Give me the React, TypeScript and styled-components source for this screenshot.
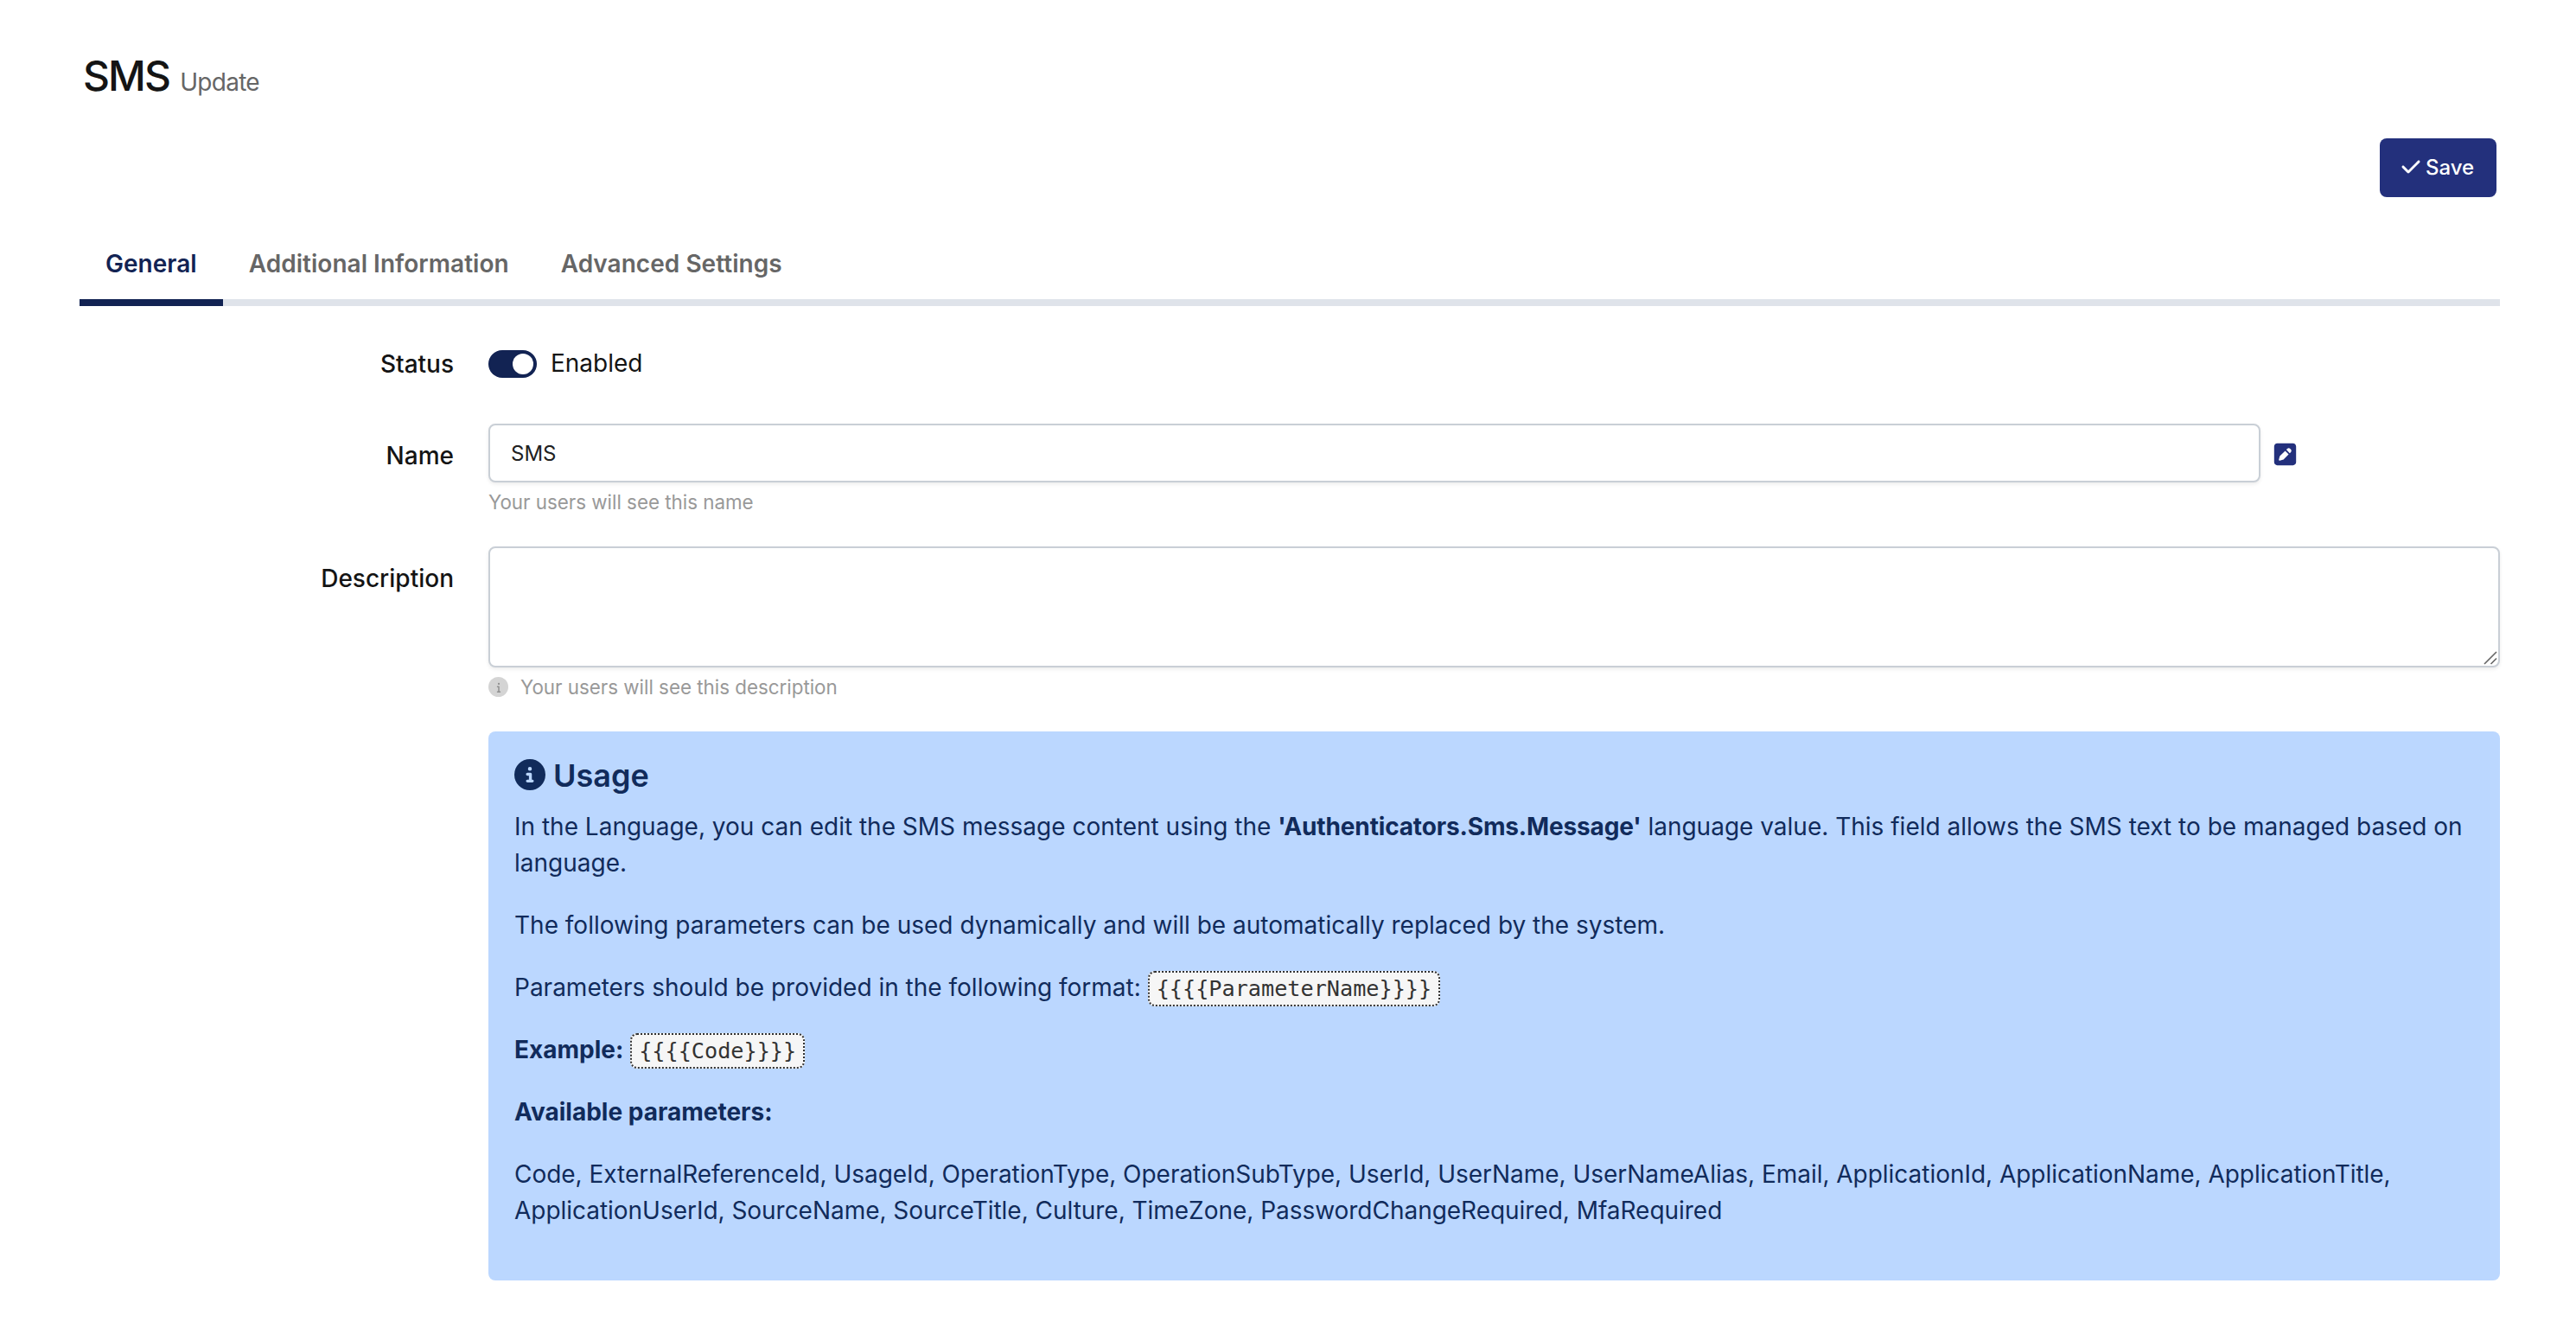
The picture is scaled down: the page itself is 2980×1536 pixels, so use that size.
import { useState } from "react";
import styled, { createGlobalStyle } from "styled-components";
import { FaCheck, FaCircleInfo, FaInfo, FaSquarePen } from "react-icons/fa6";

const tabs = ["General", "Additional Information", "Advanced Settings"];

const parameters = [
  "Code",
  "ExternalReferenceId",
  "UsageId",
  "OperationType",
  "OperationSubType",
  "UserId",
  "UserName",
  "UserNameAlias",
  "Email",
  "ApplicationId",
  "ApplicationName",
  "ApplicationTitle",
  "ApplicationUserId",
  "SourceName",
  "SourceTitle",
  "Culture",
  "TimeZone",
  "PasswordChangeRequired",
  "MfaRequired",
];

function UsagePanel() {
  return (
    <Usage>
      <UsageTitle>
        <FaCircleInfo size={36} />
        Usage
      </UsageTitle>
      <Paragraph>
        In the Language, you can edit the SMS message content using the{" "}
        <LanguageKey>'Authenticators.Sms.Message'</LanguageKey> language value.
        This field allows the SMS text to be managed based on language.
      </Paragraph>
      <Paragraph>
        The following parameters can be used dynamically and will be
        automatically replaced by the system.
      </Paragraph>
      <Paragraph>
        Parameters should be provided in the following format:{" "}
        <Code>{"{{{{ParameterName}}}}"}</Code>
      </Paragraph>
      <Paragraph>
        <b>Example:</b> <Code>{"{{{{Code}}}}"}</Code>
      </Paragraph>
      <Paragraph>
        <b>Available parameters:</b>
      </Paragraph>
      <Paragraph $tight>{parameters.join(", ")}</Paragraph>
    </Usage>
  );
}

function App() {
  const [activeTab, setActiveTab] = useState("General");
  const [enabled, setEnabled] = useState(true);
  const [name, setName] = useState("SMS");

  return (
    <Page>
      <GlobalStyle />
      <Header>
        <Title>SMS</Title>
        <SubTitle>Update</SubTitle>
      </Header>
      <Toolbar>
        <SaveButton>
          <FaCheck size={24} />
          Save
        </SaveButton>
      </Toolbar>
      <Tabs>
        {tabs.map((tab) => (
          <Tab
            key={tab}
            $active={tab === activeTab}
            onClick={() => setActiveTab(tab)}
          >
            {tab}
          </Tab>
        ))}
      </Tabs>
      <Form>
        <Label $top={14}>Status</Label>
        <SwitchRow>
          <Switch $on={enabled} onClick={() => setEnabled(!enabled)}>
            <Knob />
          </Switch>
          <SwitchText>Enabled</SwitchText>
        </SwitchRow>

        <Label $top={16}>Name</Label>
        <Field>
          <NameRow>
            <Input value={name} onChange={(e) => setName(e.target.value)} />
            <EditIcon size={29} />
          </NameRow>
          <Hint>Your users will see this name</Hint>
        </Field>

        <Label $top={16}>Description</Label>
        <Field>
          <TextAreaBox>
            <TextArea />
            <Grip viewBox="0 0 16 16">
              <path d="M1 15L15 1M8.5 15L15 8.5" />
            </Grip>
          </TextAreaBox>
          <Hint>
            <HintIcon>
              <FaInfo size={12} />
            </HintIcon>
            Your users will see this description
          </Hint>
        </Field>

        <span />
        <UsagePanel />
      </Form>
    </Page>
  );
}

export default App;

const GlobalStyle = createGlobalStyle`
  * {
    box-sizing: border-box;
  }
  body {
    margin: 0;
    background: #fff;
    color: #141414;
    font-family: Inter, sans-serif;
    font-size: 28px;
    line-height: 42px;
  }
`;
const Page = styled.div`
  padding: 58px 88px 0 92px;
`;
const Header = styled.div`
  display: flex;
  align-items: baseline;
  gap: 12px;
  height: 102px;
  padding-left: 4px;
`;
const Title = styled.h1`
  margin: 0;
  font-size: 48px;
  font-weight: 500;
  line-height: 60px;
  letter-spacing: -1.9px;
`;
const SubTitle = styled.small`
  color: #666;
  font-size: 28px;
  font-weight: 400;
  letter-spacing: -0.7px;
`;
const Toolbar = styled.div`
  display: flex;
  justify-content: flex-end;
  padding-right: 4px;
`;
const SaveButton = styled.button`
  display: flex;
  align-items: center;
  gap: 5px;
  width: 135px;
  height: 68px;
  padding: 0 24px 2px;
  border: none;
  border-radius: 8px;
  background: #23307c;
  color: #fff;
  font-family: inherit;
  font-size: 24px;
  font-weight: 500;
`;
const Tabs = styled.div`
  display: flex;
  height: 98px;
  margin-top: 28px;
  box-shadow: inset 0 -8px #dfe3ea;
`;
const Tab = styled.button<{ $active: boolean }>`
  padding: 8px 30px 0;
  border: none;
  border-bottom: 8px solid ${(p) => (p.$active ? "#122353" : "transparent")};
  background: none;
  color: ${(p) => (p.$active ? "#122353" : "#666")};
  font-family: inherit;
  font-size: 28px;
  font-weight: 600;
  letter-spacing: 0.03px;
`;
const Form = styled.div`
  display: grid;
  grid-template-columns: 433px 1fr;
  column-gap: 40px;
  padding-top: 32px;
`;
const Label = styled.label<{ $top: number }>`
  padding-top: ${(p) => p.$top}px;
  font-weight: 500;
  text-align: right;
`;
const SwitchRow = styled.div`
  display: flex;
  align-items: center;
  gap: 16px;
  height: 70px;
  margin-bottom: 34px;
`;
const Switch = styled.button<{ $on: boolean }>`
  display: flex;
  justify-content: ${(p) => (p.$on ? "flex-end" : "flex-start")};
  width: 56px;
  height: 32px;
  padding: 4px;
  border: none;
  border-radius: 16px;
  background: ${(p) => (p.$on ? "#122353" : "#adb5bd")};
`;
const Knob = styled.span`
  width: 24px;
  height: 24px;
  border-radius: 50%;
  background: #fff;
`;
const SwitchText = styled.span`
  padding-bottom: 2px;
`;
const Field = styled.div`
  padding-bottom: 35px;
`;
const NameRow = styled.div`
  display: flex;
  align-items: center;
  gap: 14px;
`;
const Input = styled.input`
  width: 2050px;
  height: 68px;
  padding: 0 24px;
  border: 2px solid #c9cfd6;
  border-radius: 8px;
  outline: none;
  box-shadow: 0 2px 4px rgba(0, 0, 0, 0.08);
  color: #212121;
  font-family: inherit;
  font-size: 24px;
`;
const EditIcon = styled(FaSquarePen)`
  margin-top: 3px;
  color: #23307c;
`;
const TextAreaBox = styled.div`
  position: relative;
`;
const TextArea = styled.textarea`
  display: block;
  width: 100%;
  height: 140px;
  padding: 16px 24px;
  border: 2px solid #c9cfd6;
  border-radius: 8px;
  outline: none;
  resize: none;
  box-shadow: 0 2px 4px rgba(0, 0, 0, 0.08);
  font-family: inherit;
  font-size: 24px;
`;
const Grip = styled.svg`
  position: absolute;
  right: 3px;
  bottom: 3px;
  width: 16px;
  height: 16px;
  fill: none;
  stroke: #666;
  stroke-width: 1.6;
`;
const Hint = styled.div`
  display: flex;
  align-items: center;
  height: 33px;
  margin-top: 6px;
  color: #999;
  font-size: 22.4px;
  letter-spacing: -0.02px;
`;
const HintIcon = styled.span`
  display: flex;
  align-items: center;
  justify-content: center;
  width: 23px;
  height: 23px;
  margin-right: 14px;
  border-radius: 50%;
  background: #d4d4d4;
  color: #8f8f8f;
`;
const Usage = styled.section`
  height: 635px;
  padding: 29px 30px;
  border-radius: 8px;
  background: #bbd7ff;
  color: #112b5b;
`;
const UsageTitle = styled.h4`
  display: flex;
  align-items: center;
  gap: 9px;
  margin: 0 0 16px;
  font-size: 36px;
  font-weight: 600;
  line-height: 44px;

  svg {
    margin-bottom: 2px;
  }
`;
const Paragraph = styled.p<{ $tight?: boolean }>`
  margin: 0 0 30px;
  letter-spacing: ${(p) => (p.$tight ? "-0.03px" : "normal")};
`;
const LanguageKey = styled.b`
  letter-spacing: -0.15px;
`;
const Code = styled.code`
  padding: 4px 8px;
  border: 2px dotted #333;
  border-radius: 8px;
  background: #f6f6f6;
  color: #333;
  font-family: "DejaVu Sans Mono", monospace;
  font-size: 25.2px;
  line-height: 1;
`;
